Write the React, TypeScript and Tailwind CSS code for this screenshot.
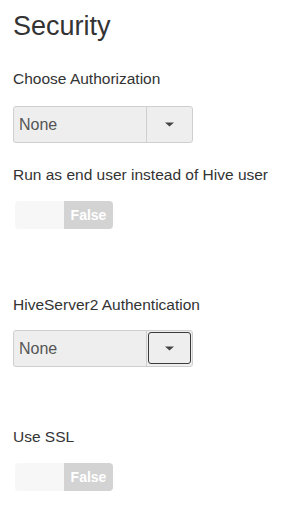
import { useState } from "react";

type SelectProps = {
  value: string;
  focused?: boolean;
};

function Select({ value, focused }: SelectProps) {
  return (
    <div className="flex h-[37px] w-[180px] rounded-[3px] border border-[#cfcfcf] bg-[#eeeeee]">
      <div className="flex flex-1 items-center pl-[5px] text-[16px] text-[#555555]">
        {value}
      </div>
      <div className="w-[46px] border-l border-[#cfcfcf] p-px pb-[2px]">
        <div
          className={
            focused
              ? "flex h-full items-center justify-center rounded-[3px] border border-[#3a3a3a]"
              : "flex h-full items-center justify-center rounded-[3px] border border-transparent"
          }
        >
          <svg width="9" height="5" viewBox="0 0 9 5">
            <path d="M0 0.5 L9 0.5 L4.5 4.5 Z" fill="#444444" />
          </svg>
        </div>
      </div>
    </div>
  );
}

function Toggle({ on }: { on: boolean }) {
  return (
    <div className="ml-[2px] flex h-[28px] w-[98px] overflow-hidden rounded-[4px]">
      <div className="flex-1 bg-[#f7f7f7]" />
      <div className="flex w-[49px] items-center justify-center bg-[#d3d3d3] text-[14px] font-bold text-white">
        {on ? "True" : "False"}
      </div>
    </div>
  );
}

export default function App() {
  const [runAsUser] = useState(false);
  const [useSsl] = useState(false);

  return (
    <div
      className="min-h-screen bg-white pl-[13px] pt-[10px] text-[#333333]"
      style={{ fontFamily: '"Liberation Sans", Arial, sans-serif' }}
    >
      <h3 className="text-[27px] leading-[32px]">Security</h3>

      <div className="mt-[27px] text-[15.5px] leading-5">Choose Authorization</div>
      <div className="mt-[17px]">
        <Select value="None" />
      </div>

      <div className="mt-[22px] text-[15.5px] leading-5">
        Run as end user instead of Hive user
      </div>
      <div className="mt-[16px]">
        <Toggle on={runAsUser} />
      </div>

      <div className="mt-[66px] text-[15.5px] leading-5">
        HiveServer2 Authentication
      </div>
      <div className="mt-[15px]">
        <Select value="None" focused />
      </div>

      <div className="mt-[60px] text-[15.5px] leading-5">Use SSL</div>
      <div className="mt-[16px]">
        <Toggle on={useSsl} />
      </div>
    </div>
  );
}
